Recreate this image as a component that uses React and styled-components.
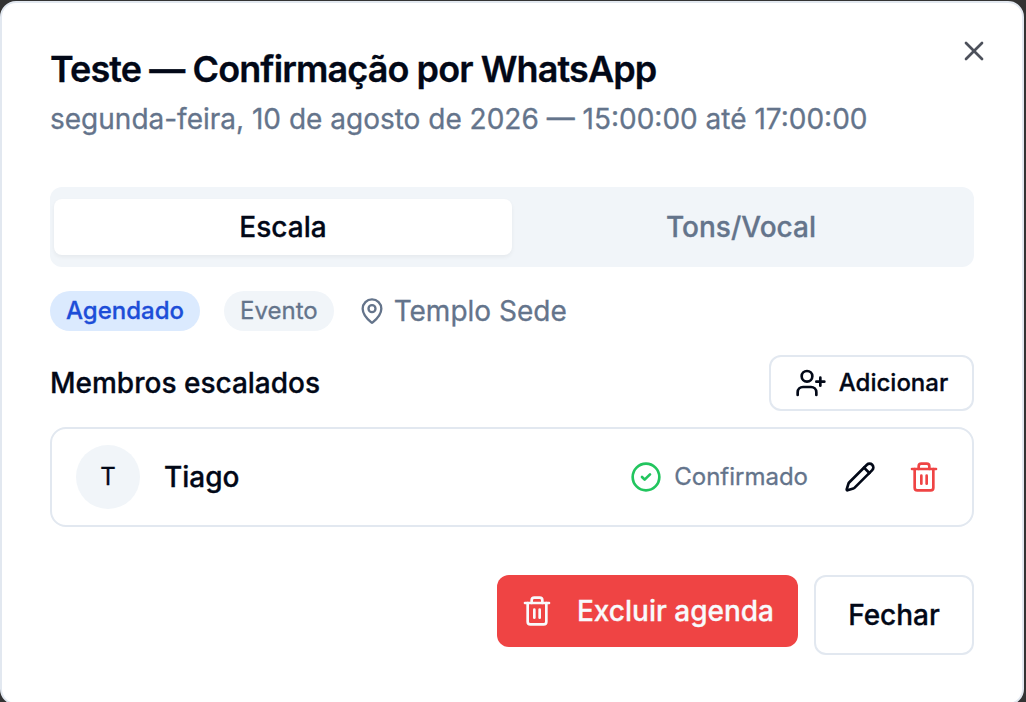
import styled, { createGlobalStyle } from "styled-components";
import { CircleCheck, MapPin, Pencil, Trash2, UserPlus, X } from "lucide-react";

const colors = {
  foreground: "#020817",
  muted: "#64748b",
  surface: "#f1f5f9",
  border: "#e2e8f0",
  danger: "#ef4444",
  success: "#22c55e",
};

export default function App() {
  return (
    <>
      <GlobalStyle />
      <Dialog role="dialog" aria-labelledby="dialog-title">
        <CloseIcon aria-label="Fechar">
          <X size={32} strokeWidth={2} />
        </CloseIcon>

        <Header>
          <Title id="dialog-title">Teste — Confirmação por WhatsApp</Title>
          <Description>
            segunda-feira, 10 de agosto de 2026 — 15:00:00 até 17:00:00
          </Description>
        </Header>

        <Tabs role="tablist">
          <Tab role="tab" $active>
            Escala
          </Tab>
          <Tab role="tab">Tons/Vocal</Tab>
        </Tabs>

        <Meta>
          <Badge $primary>Agendado</Badge>
          <Badge>Evento</Badge>
          <Location>
            <MapPin size={28} />
            Templo Sede
          </Location>
        </Meta>

        <SectionHeader>
          <SectionTitle>Membros escalados</SectionTitle>
          <AddButton>
            <UserPlus size={32} />
            Adicionar
          </AddButton>
        </SectionHeader>

        <Member>
          <Avatar>T</Avatar>
          <Name>Tiago</Name>
          <Status>
            <CircleCheck size={32} color={colors.success} />
            Confirmado
          </Status>
          <IconButton aria-label="Editar">
            <Pencil size={32} />
          </IconButton>
          <IconButton aria-label="Remover" $danger>
            <Trash2 size={32} />
          </IconButton>
        </Member>

        <Footer>
          <DeleteButton>
            <Trash2 size={32} />
            Excluir agenda
          </DeleteButton>
          <CloseButton>Fechar</CloseButton>
        </Footer>
      </Dialog>
    </>
  );
}

// Styles
const GlobalStyle = createGlobalStyle`
  * {
    box-sizing: border-box;
  }

  body {
    margin: 0;
    padding-top: 1px;
    overflow: hidden;
    background: #333333;
    color: ${colors.foreground};
    font-family: Inter, "Liberation Sans", sans-serif;
    -webkit-font-smoothing: antialiased;
    -webkit-text-stroke: 0.3px currentColor;
  }

  h2, h3, p {
    margin: 0;
  }

  button {
    border: none;
    background: none;
    color: inherit;
    font-family: inherit;
    cursor: pointer;
  }
`;

const Dialog = styled.div`
  position: relative;
  width: 1024px;
  height: 704px;
  padding: 48px;
  background: white;
  border: 2px solid ${colors.border};
  border-radius: 16px;
`;

const CloseIcon = styled.button`
  position: absolute;
  top: 32px;
  right: 32px;
  display: flex;
  padding: 0;
  opacity: 0.7;
`;

const Header = styled.div`
  display: flex;
  flex-direction: column;
  gap: 12px;
`;

const Title = styled.h2`
  font-size: 36px;
  font-weight: 600;
  line-height: 36px;
  letter-spacing: -0.9px;
`;

const Description = styled.p`
  color: ${colors.muted};
  font-size: 28px;
  line-height: 40px;
`;

const Tabs = styled.div`
  display: grid;
  grid-template-columns: 1fr 1fr;
  height: 80px;
  margin-top: 48px;
  padding: 12px 4px;
  background: ${colors.surface};
  border-radius: 12px;
`;

const Tab = styled.button`
  border-radius: 8px;
  background: ${(props) => (props.$active ? "white" : "transparent")};
  color: ${(props) => (props.$active ? colors.foreground : colors.muted)};
  box-shadow: ${(props) =>
    props.$active ? "0 2px 4px rgba(0, 0, 0, 0.05)" : "none"};
  font-size: 28px;
  font-weight: 500;
  line-height: 40px;
`;

const Meta = styled.div`
  display: flex;
  align-items: center;
  gap: 24px;
  margin-top: 24px;
`;

const Badge = styled.span`
  height: 40px;
  padding: 4px 16px;
  border-radius: 20px;
  background: ${(props) => (props.$primary ? "#dbeafe" : colors.surface)};
  color: ${(props) => (props.$primary ? "#1d4ed8" : colors.muted)};
  font-size: 24px;
  font-weight: ${(props) => (props.$primary ? 500 : 400)};
  line-height: 32px;
`;

const Location = styled.span`
  display: flex;
  align-items: center;
  gap: 8px;
  color: ${colors.muted};
  font-size: 28px;
  line-height: 40px;
`;

const SectionHeader = styled.div`
  display: flex;
  align-items: center;
  justify-content: space-between;
  margin-top: 24px;
`;

const SectionTitle = styled.h3`
  font-size: 28px;
  font-weight: 500;
  line-height: 40px;
`;

const AddButton = styled.button`
  display: flex;
  align-items: center;
  justify-content: center;
  gap: 12px;
  width: 205px;
  height: 56px;
  padding: 0;
  border: 2px solid ${colors.border};
  border-radius: 12px;
  font-size: 24px;
  font-weight: 500;
  line-height: 32px;
`;

const Member = styled.div`
  display: flex;
  align-items: center;
  height: 100px;
  margin-top: 16px;
  padding: 0 16px 0 24px;
  border: 2px solid ${colors.border};
  border-radius: 16px;
`;

const Avatar = styled.div`
  display: flex;
  align-items: center;
  justify-content: center;
  width: 64px;
  height: 64px;
  border-radius: 50%;
  background: ${colors.surface};
  font-size: 24px;
  line-height: 32px;
`;

const Name = styled.span`
  margin-left: 24px;
  font-size: 28px;
  font-weight: 500;
  line-height: 40px;
`;

const Status = styled.span`
  display: flex;
  align-items: center;
  gap: 12px;
  margin: 0 20px 0 auto;
  color: ${colors.muted};
  font-size: 24px;
  line-height: 32px;
`;

const IconButton = styled.button`
  display: flex;
  align-items: center;
  justify-content: center;
  width: 64px;
  height: 64px;
  padding: 0;
  color: ${(props) => (props.$danger ? colors.danger : colors.foreground)};
`;

const Footer = styled.div`
  display: flex;
  align-items: flex-start;
  justify-content: flex-end;
  gap: 16px;
  margin-top: 48px;
`;

const DeleteButton = styled.button`
  display: flex;
  align-items: center;
  gap: 24px;
  height: 72px;
  padding: 0 24px;
  border-radius: 12px;
  background: ${colors.danger};
  color: #f8fafc;
  font-size: 28px;
  font-weight: 500;
  line-height: 40px;
`;

const CloseButton = styled.button`
  width: 160px;
  height: 80px;
  padding: 0;
  border: 2px solid ${colors.border};
  border-radius: 12px;
  font-size: 28px;
  font-weight: 500;
  line-height: 40px;
`;
